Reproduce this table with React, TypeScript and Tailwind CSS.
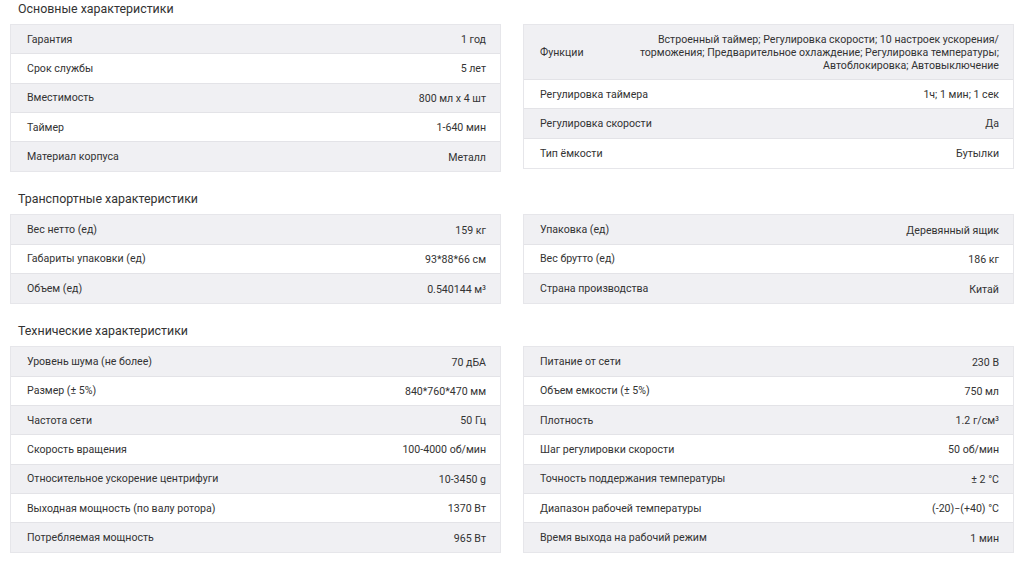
type Row = [string, React.ReactNode];

const mainLeft: Row[] = [
  ['Гарантия', '1 год'],
  ['Срок службы', '5 лет'],
  ['Вместимость', '800 мл x 4 шт'],
  ['Таймер', '1-640 мин'],
  ['Материал корпуса', 'Металл'],
];

const mainRight: Row[] = [
  [
    'Функции',
    'Встроенный таймер; Регулировка скорости; 10 настроек ускорения/торможения; Предварительное охлаждение; Регулировка температуры; Автоблокировка; Автовыключение',
  ],
  ['Регулировка таймера', '1ч; 1 мин; 1 сек'],
  ['Регулировка скорости', 'Да'],
  ['Тип ёмкости', 'Бутылки'],
];

const transportLeft: Row[] = [
  ['Вес нетто (ед)', '159 кг'],
  ['Габариты упаковки (ед)', '93*88*66 см'],
  ['Объем (ед)', '0.540144 м³'],
];

const transportRight: Row[] = [
  ['Упаковка (ед)', 'Деревянный ящик'],
  ['Вес брутто (ед)', '186 кг'],
  ['Страна производства', 'Китай'],
];

const techLeft: Row[] = [
  ['Уровень шума (не более)', '70 дБА'],
  ['Размер (± 5%)', '840*760*470 мм'],
  ['Частота сети', '50 Гц'],
  ['Скорость вращения', '100-4000 об/мин'],
  ['Относительное ускорение центрифуги', '10-3450 g'],
  ['Выходная мощность (по валу ротора)', '1370 Вт'],
  ['Потребляемая мощность', '965 Вт'],
];

const techRight: Row[] = [
  ['Питание от сети', '230 В'],
  ['Объем емкости (± 5%)', '750 мл'],
  ['Плотность', '1.2 г/см³'],
  ['Шаг регулировки скорости', '50 об/мин'],
  ['Точность поддержания температуры', '± 2 °C'],
  ['Диапазон рабочей температуры', '(-20)−(+40) °C'],
  ['Время выхода на рабочий режим', '1 мин'],
];

function SpecTable({ rows }: { rows: Row[] }) {
  return (
    <div className="self-start border border-[#e6e6ea]">
      {rows.map(([label, value], i) => (
        <div
          key={label}
          className={`flex min-h-[29.3px] items-center justify-between gap-6 border-b border-[#e3e3e7] pl-4 pr-[14px] last:border-b-0 ${
            i % 2 === 0 ? 'bg-[#f0f0f3]' : 'bg-white'
          } ${label === 'Функции' ? 'pt-[8px] pb-[7px]' : 'pt-px'}`}
        >
          <span className="shrink-0">{label}</span>
          <span className="max-w-[362px] text-right leading-[13px]">{value}</span>
        </div>
      ))}
    </div>
  );
}

function Section({ title, left, right }: { title: string; left: Row[]; right: Row[] }) {
  return (
    <section className="mb-[18px]">
      <h2 className="mb-[6px] pl-[8px] text-[12.4px] leading-[18px] text-[#333]">{title}</h2>
      <div className="grid grid-cols-2 gap-[22px]">
        <SpecTable rows={left} />
        <SpecTable rows={right} />
      </div>
    </section>
  );
}

export default function App() {
  return (
    <div className="min-h-screen bg-white px-[10px] text-[10.6px] text-[#333] [font-family:Roboto,'Liberation_Sans',sans-serif]">
      <Section title="Основные характеристики" left={mainLeft} right={mainRight} />
      <Section title="Транспортные характеристики" left={transportLeft} right={transportRight} />
      <Section title="Технические характеристики" left={techLeft} right={techRight} />
    </div>
  );
}
